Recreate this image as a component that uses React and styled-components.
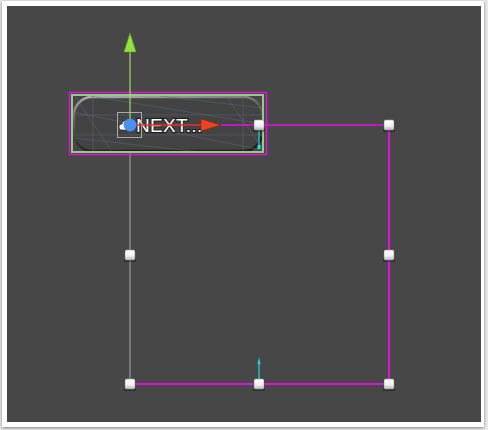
import React from 'react';
import styled, { createGlobalStyle } from 'styled-components';

const GlobalStyle = createGlobalStyle`
  html, body {
    margin: 0;
    padding: 0;
    background: #e9e9e9;
    font-family: "Liberation Sans", Arial, sans-serif;
  }
`;

const Page = styled.div`
  width: 488px;
  height: 430px;
  padding: 1px 0 0 2px;
  box-sizing: border-box;
`;

const Window = styled.div`
  width: 482px;
  height: 426px;
  box-sizing: border-box;
  padding: 5px 3px 5px 5px;
  background: #ffffff;
  box-shadow: 0 1px 3px rgba(0, 0, 0, 0.45);
`;

const Viewport = styled.div`
  width: 474px;
  height: 416px;
  background: #474747;
  overflow: hidden;
`;

const Canvas = styled.svg`
  display: block;
  width: 474px;
  height: 416px;
`;

const Label = styled.text`
  font-family: "Liberation Sans", Arial, sans-serif;
  font-size: 19px;
  fill: #ffffff;
  stroke: #1c1c1c;
  stroke-width: 2px;
  paint-order: stroke;
  letter-spacing: 0.3px;
`;

const MAGENTA = '#e012e0';
const handles = [
  [259, 125], [389, 125], [130, 255], [389, 255],
  [130, 384], [259, 384], [389, 384],
];

const wire = [
  [73, 115, 263, 115],
  [73, 135, 263, 135],
  [93, 96, 93, 152],
  [243, 96, 243, 152],
  [76, 98, 112, 152],
  [90, 96, 262, 124],
  [73, 112, 262, 150],
  [160, 96, 262, 108],
  [74, 138, 200, 152],
  [226, 96, 262, 148],
];

function Handle({ x, y }) {
  return (
    <g>
      <rect x={x - 6} y={y - 5} width={12} height={12} rx={1.5} fill="rgba(0,0,0,0.35)" />
      <rect x={x - 5} y={y - 5} width={10} height={10} rx={1.5} fill="url(#handleGrad)" stroke="#9a9a9a" strokeWidth={0.6} />
    </g>
  );
}

export default function App() {
  return (
    <>
      <GlobalStyle />
      <Page>
        <Window>
          <Viewport>
            <Canvas viewBox="7 6 474 416">
              <defs>
                <linearGradient id="handleGrad" x1="0" y1="0" x2="0" y2="1">
                  <stop offset="0" stopColor="#ffffff" />
                  <stop offset="0.55" stopColor="#f2f2f2" />
                  <stop offset="1" stopColor="#b9b9b9" />
                </linearGradient>
                <linearGradient id="rimGrad" x1="0" y1="0" x2="0.3" y2="1">
                  <stop offset="0" stopColor="#b0b0b0" />
                  <stop offset="0.4" stopColor="#606060" />
                  <stop offset="1" stopColor="#1e1e1e" />
                </linearGradient>
              </defs>

              {/* rect outline lines */}
              <line x1={130} y1={140} x2={130} y2={384} stroke="#a8a8a8" strokeWidth={1} />
              <line x1={130} y1={384} x2={389} y2={384} stroke={MAGENTA} strokeWidth={2} />
              <line x1={389} y1={125} x2={389} y2={384} stroke={MAGENTA} strokeWidth={2} />
              <line x1={259} y1={384} x2={259} y2={361} stroke="#22d8e0" strokeWidth={1.2} />
              <polygon points="259,357 257.5,364 260.5,364" fill="#22d8e0" />

              {/* button */}
              <rect x={69.5} y={92.5} width={197} height={62} fill="none" stroke={MAGENTA} strokeWidth={1.5} />
              <rect x={74} y={97} width={188} height={54} rx={18} fill="#434343" stroke="url(#rimGrad)" strokeWidth={2.5} />
              {wire.map(([a, b, c, d], i) => (
                <line key={i} x1={a} y1={b} x2={c} y2={d} stroke="#5f6d88" strokeWidth={0.8} opacity={0.55} />
              ))}
              <rect x={72} y={95} width={191} height={57} fill="none" stroke="#8fd080" strokeWidth={2} />

              <Label x={136} y={132}>NEXT...</Label>

              {/* pivot handle */}
              <rect x={117.5} y={112.5} width={24} height={25} fill="none" stroke="#a9a9a9" strokeWidth={1} />
              <path d="M122 130 a3 3 0 0 1 0-6 a3.5 3.5 0 0 1 6-2 l0 8 z" fill="#ffffff" stroke="#222" strokeWidth={0.6} />

              {/* y axis */}
              <line x1={130} y1={50} x2={130} y2={125} stroke="#a7d873" strokeWidth={1.2} />
              <polygon points="130,33 124,52 136,52" fill="#8fe33a" stroke="#5e9b20" strokeWidth={0.5} />

              {/* x axis */}
              <line x1={221} y1={125} x2={389} y2={125} stroke={MAGENTA} strokeWidth={1.5} />
              <line x1={130} y1={125} x2={204} y2={125} stroke="#ec2f2f" strokeWidth={1.5} />
              <polygon points="221,125 201,119 201,131" fill="#ee4320" stroke="#8a1a08" strokeWidth={0.5} />

              <line x1={259} y1={129} x2={259} y2={148} stroke="#22d8e0" strokeWidth={1.2} />
              <rect x={257.5} y={145} width={3} height={4} fill="#22d8e0" />

              <circle cx={130} cy={125} r={6.5} fill="#4a90f0" />

              {handles.map(([x, y]) => (
                <Handle key={`${x}-${y}`} x={x} y={y} />
              ))}
            </Canvas>
          </Viewport>
        </Window>
      </Page>
    </>
  );
}
